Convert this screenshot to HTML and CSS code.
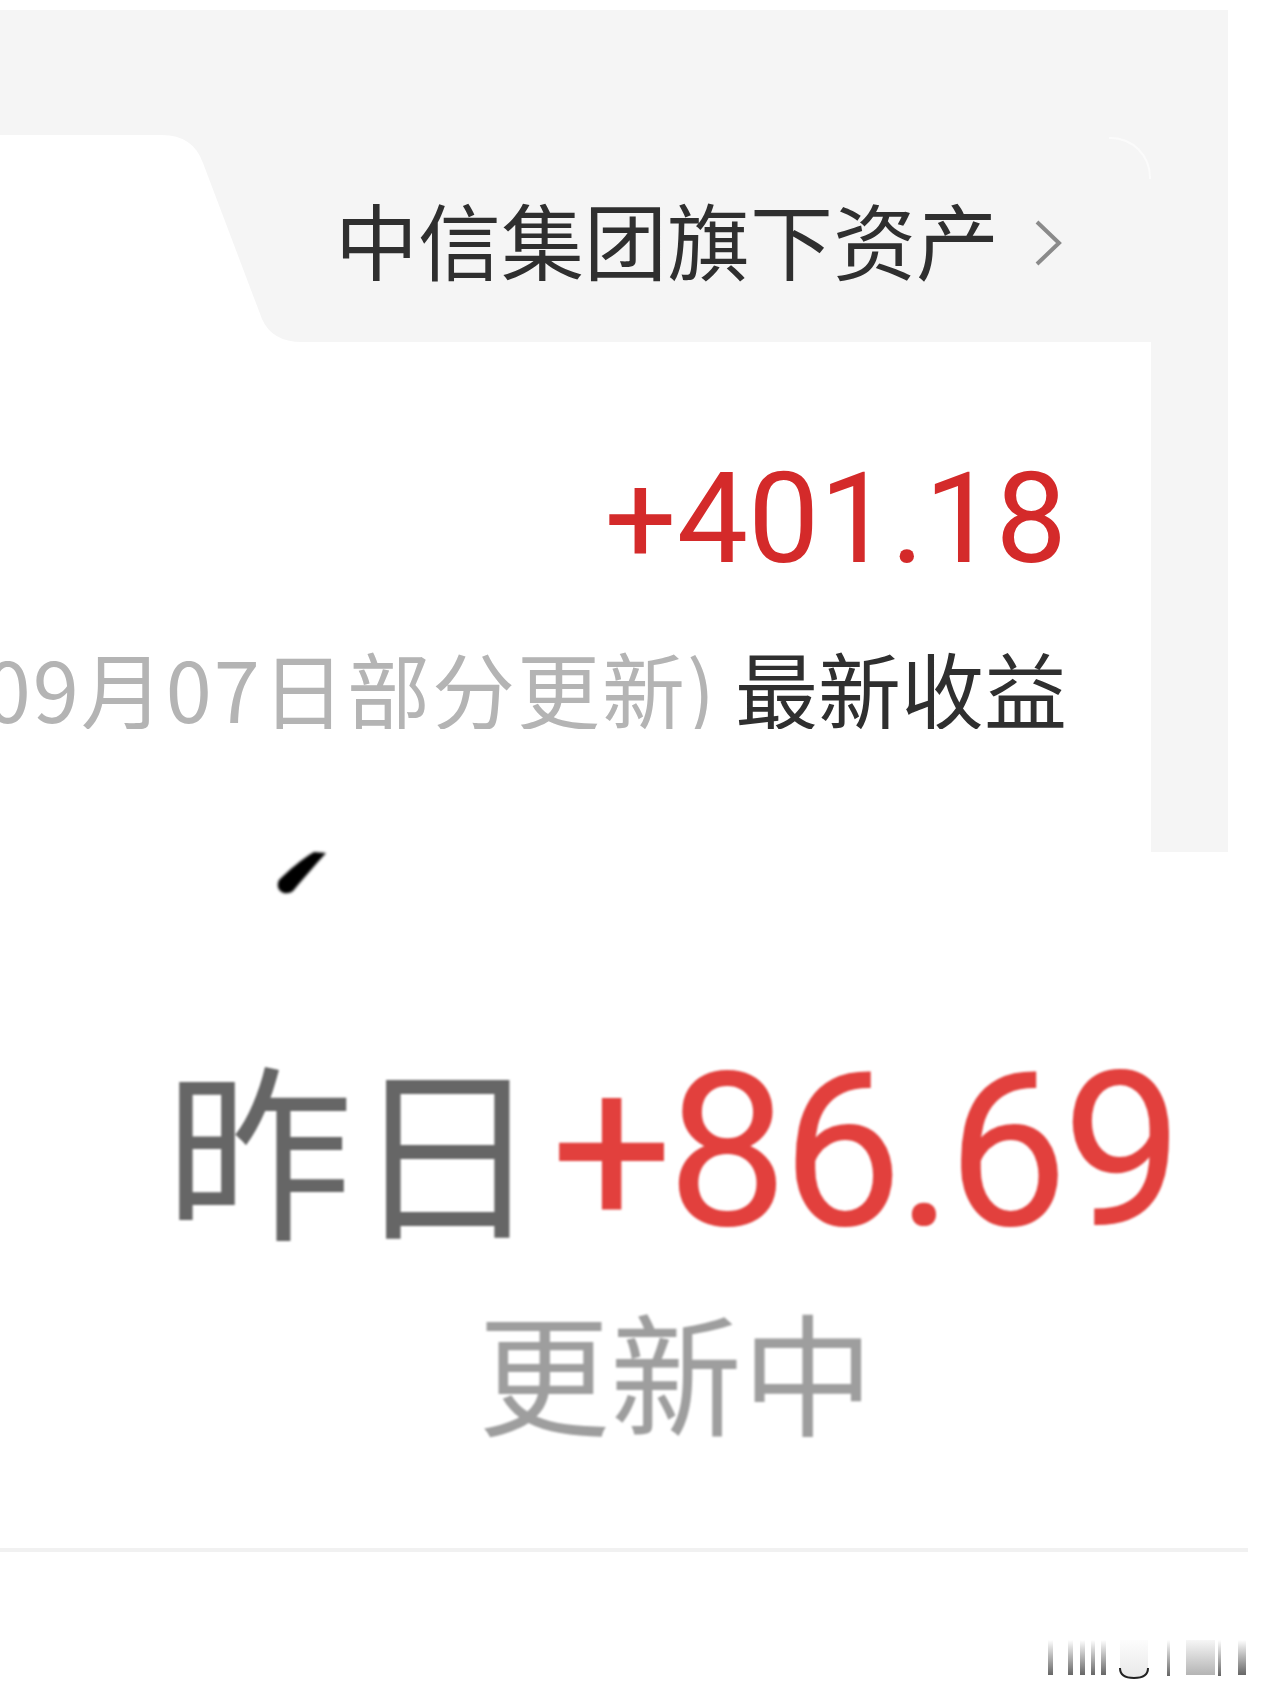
FILE: index.html
```html
<!DOCTYPE html>
<html lang="zh-CN">
<head>
<meta charset="utf-8">
<title>收益</title>
<link rel="stylesheet" href="styles.css">
</head>
<body>
<div class="page">
  <section class="card">
    <div class="tabs">
      <div class="tab-active">
        <svg class="tab-shape" width="310" height="207" viewBox="0 0 310 207">
          <path d="M0 0 H162 Q193 0 203 28 L262 184 Q272 207 302 207 H0 Z" fill="#ffffff"/>
        </svg>
      </div>
      <div class="tab-other">
        <span class="tab-title">中信集团旗下资产</span>
        <svg class="chevron" width="30" height="48" viewBox="0 0 30 48">
          <polyline points="4,3 26,24 4,45" fill="none" stroke="#8a8a8a" stroke-width="4" stroke-linejoin="miter"/>
        </svg>
      </div>
    </div>
    <div class="panel">
      <div class="amount">+401.18</div>
      <div class="sub-line">
        <span class="sub-note">(09月07日部分更新)</span>
        <span class="sub-label">最新收益</span>
      </div>
    </div>
  </section>

  <section class="bottom">
    <svg class="mark" width="90" height="44" viewBox="0 0 90 44">
      <path d="M31 28 C41 18 54 7 66 0 L78 1 C66 14 55 27 45 39 C37 45 26 38 31 28 Z" fill="#000000"/>
    </svg>
    <div class="yday">
      <span class="yday-label">昨日</span>
      <span class="yday-value">+86.69</span>
    </div>
    <div class="updating">更新中</div>
    <div class="divider"></div>
    <div class="foot">
      <svg class="code" width="200" height="40" viewBox="0 0 200 40">
        <defs>
          <linearGradient id="fade" x1="0" y1="0" x2="0" y2="1">
            <stop offset="0" stop-color="#ffffff"/>
            <stop offset="1" stop-color="#666666"/>
          </linearGradient>
          <linearGradient id="fadeLight" x1="0" y1="0" x2="0" y2="1">
            <stop offset="0" stop-color="#f6f6f6"/>
            <stop offset="1" stop-color="#b4b4b4"/>
          </linearGradient>
        </defs>
        <rect x="0" y="0" width="5" height="35" fill="url(#fade)"/>
        <rect x="20" y="0" width="5" height="35" fill="url(#fade)"/>
        <rect x="32" y="0" width="5" height="35" fill="url(#fade)"/>
        <rect x="43" y="0" width="4" height="35" fill="url(#fade)"/>
        <rect x="53" y="0" width="5" height="35" fill="url(#fade)"/>
        <path d="M72 0 V28 Q72 38 86 38 Q100 38 100 28 V0" fill="url(#fadeLight)" fill-opacity="0.3" stroke="none"/>
        <path d="M72 28 Q72 38 86 38 Q100 38 100 28" fill="none" stroke="#222" stroke-width="2"/>
        <rect x="119" y="0" width="3" height="36" fill="url(#fade)"/>
        <rect x="138" y="0" width="29" height="35" fill="url(#fadeLight)"/>
        <rect x="170" y="0" width="3" height="36" fill="url(#fade)"/>
        <rect x="190" y="0" width="8" height="35" fill="url(#fade)"/>
      </svg>
    </div>
  </section>
</div>
</body>
</html>
```

FILE: styles.css
```css
html, body {
  margin: 0;
  padding: 0;
  background: #ffffff;
}

body {
  width: 1280px;
  font-family: "Noto Sans CJK SC", "Noto Sans", sans-serif;
  color: #333333;
}

.page {
  padding-top: 10px;
  overflow: hidden;
}

.card {
  width: 1228px;
  height: 842px;
  background: #f5f5f5;
  display: flex;
  flex-direction: column;
}

.tabs {
  margin-top: 125px;
  height: 207px;
  display: flex;
  width: 1151px;
}

.tab-active {
  width: 300px;
  flex: none;
  position: relative;
}

.tab-shape {
  display: block;
}

.tab-other {
  flex: 1;
  display: flex;
  align-items: center;
  justify-content: flex-end;
  padding-right: 88px;
  position: relative;
}

.tab-other::after {
  content: "";
  position: absolute;
  top: 2px;
  right: 0;
  width: 40px;
  height: 40px;
  border-top: 2px solid #fbfbfb;
  border-right: 2px solid #fbfbfb;
  border-top-right-radius: 40px;
}

.tab-title {
  font-size: 83px;
  line-height: 1;
  color: #2f2f2f;
  white-space: nowrap;
}

.chevron {
  display: block;
  margin-left: 34px;
  margin-top: 8px;
}

.panel {
  width: 1151px;
  flex: 1;
  background: #ffffff;
  box-sizing: border-box;
  padding-top: 113px;
  padding-right: 84px;
  display: flex;
  flex-direction: column;
  align-items: flex-end;
}

.amount {
  font-family: Roboto, "Noto Sans", sans-serif;
  font-size: 127px;
  line-height: 1;
  color: #d42a2a;
}

.sub-line {
  margin-top: 64px;
  width: 100%;
  display: flex;
  justify-content: flex-end;
  overflow: hidden;
  white-space: nowrap;
  font-size: 83px;
  line-height: 1;
}

.sub-note {
  flex: none;
  color: #b4b4b4;
  letter-spacing: 2px;
  margin-right: 18px;
}

.sub-label {
  flex: none;
  color: #2f2f2f;
}

.bottom {
  display: flex;
  flex-direction: column;
}

.mark {
  display: block;
  margin-left: 248px;
  filter: blur(1.5px);
}

.yday {
  margin-top: 148px;
  display: flex;
  align-items: baseline;
  margin-left: 165px;
  filter: blur(1px);
}

.yday-label {
  font-size: 188px;
  line-height: 1;
  color: #666666;
}

.yday-value {
  font-family: Roboto, "Noto Sans", sans-serif;
  font-size: 215px;
  line-height: 1;
  color: #e2403d;
  letter-spacing: -6px;
  margin-left: 10px;
}

.updating {
  margin-top: 44px;
  margin-left: 478px;
  font-size: 132px;
  line-height: 1;
  color: #9e9e9e;
  filter: blur(1.2px);
}

.divider {
  margin-top: 113px;
  width: 1248px;
  height: 4px;
  background: #f1f1f1;
}

.foot {
  width: 1248px;
  margin-top: 88px;
  display: flex;
  justify-content: flex-end;
}

.code {
  display: block;
}
```
